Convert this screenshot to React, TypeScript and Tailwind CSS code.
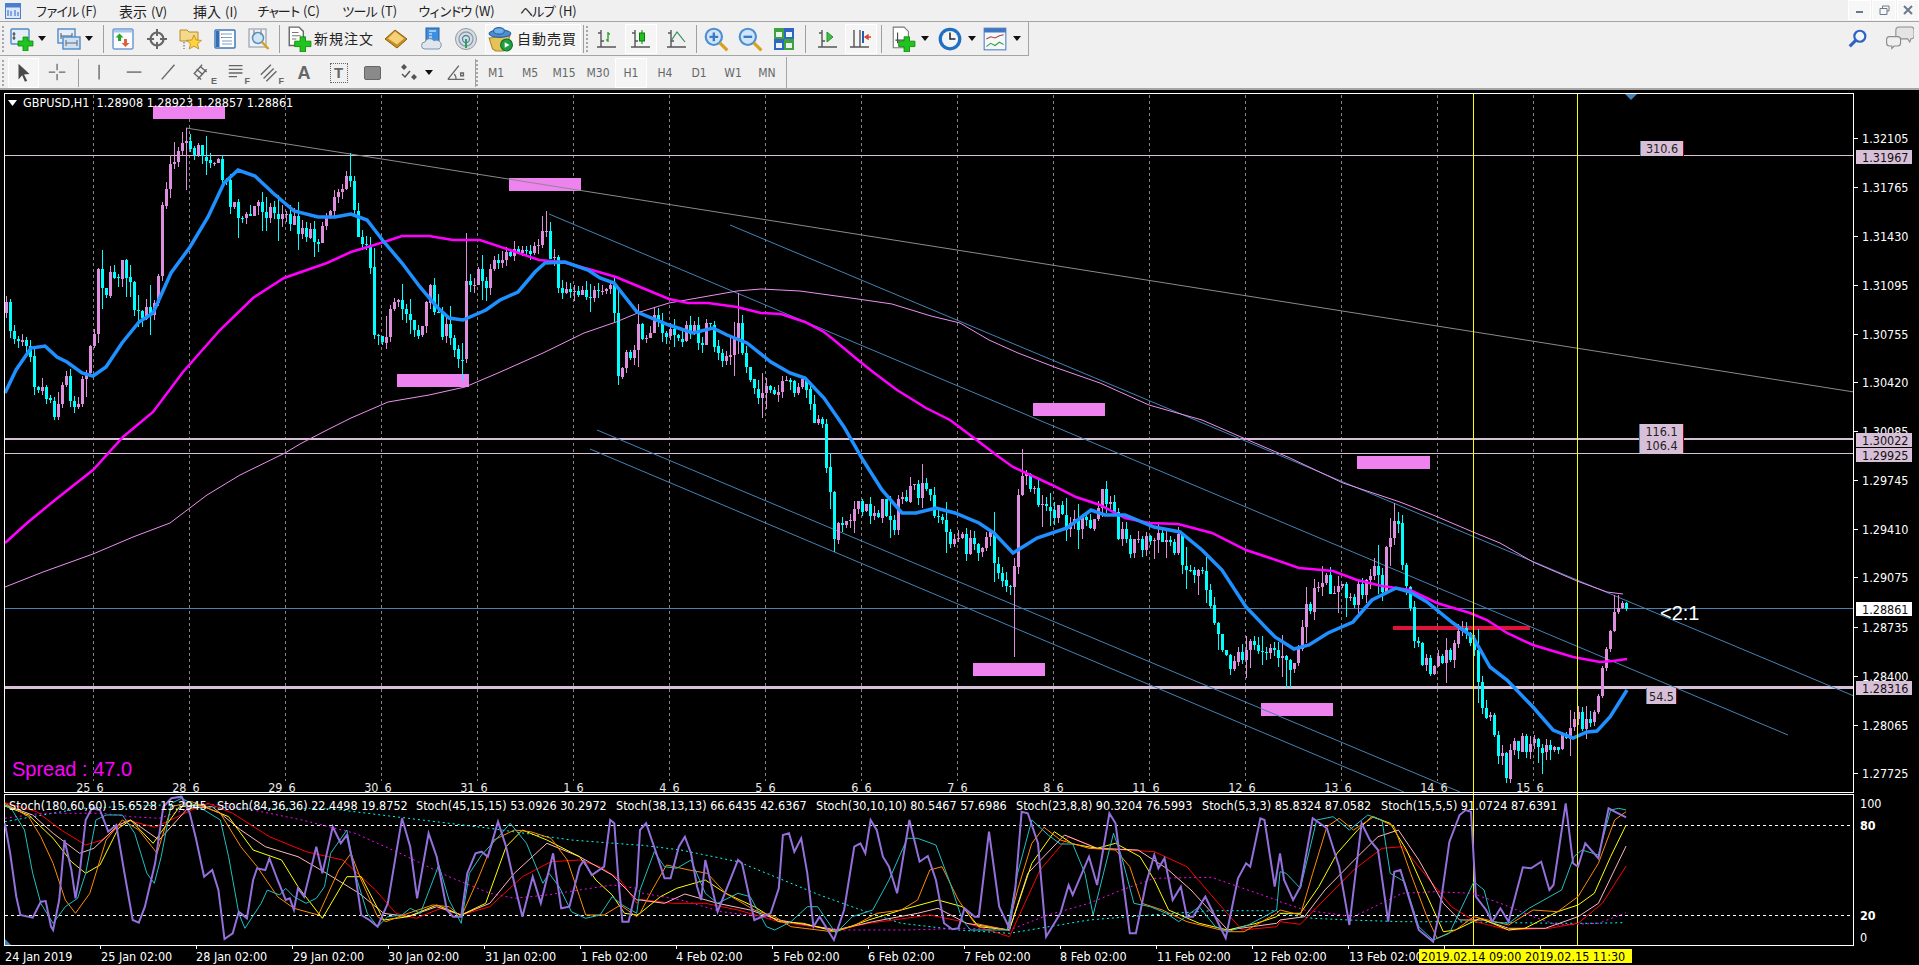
import React from 'react';

// ---- Tipos y helpers ----
type Pt = [number, number];
const arial = "'Liberation Sans', Arial, sans-serif";
const tahoma = "'DejaVu Sans Condensed', 'DejaVu Sans', 'Liberation Sans', sans-serif";

// zoom coords -> page coords for the stochastic window
const z = (off: number, pts: number[][]): string =>
  pts.map(([X, Y]) => `${((X + off) / 2.45).toFixed(1)},${(740 + Y / 3).toFixed(1)}`).join(' ');
const st = (a: number[][], b: number[][], c: number[][]) => `${z(0, a)} ${z(1568, b)} ${z(3136, c)}`;
const poly = (p: number[][]) => p.map(([x, y]) => `${x},${y}`).join(' ');

const GRID = Array.from({ length: 16 }, (_, i) => 93.5 + 96 * i);

// ---- Medias móviles ----
const BLUE_MA = [[5,393],[16,370],[31,348],[45,346],[57,357],[67,362],[82,373],[93,376],[106,367],[122,343],[139,322],[153,313],[171,273],[190,247],[208,217],[224,183],[238,170],[255,176],[273,193],[294,211],[318,217],[335,217],[351,214],[367,220],[384,242],[402,263],[420,287],[437,307],[449,318],[463,320],[486,310],[500,300],[518,292],[535,272],[545,263],[565,262],[588,270],[600,278],[614,283],[637,312],[669,325],[693,333],[713,328],[727,335],[747,343],[771,362],[790,373],[805,378],[824,398],[844,427],[863,460],[882,490],[902,513],[916,513],[936,508],[955,513],[979,523],[994,533],[1013,553],[1037,538],[1067,528],[1091,510],[1105,515],[1125,515],[1154,527],[1180,532],[1202,550],[1222,570],[1246,607],[1275,637],[1294,649],[1309,645],[1328,633],[1353,622],[1372,600],[1396,588],[1410,592],[1427,602],[1453,623],[1473,637],[1490,667],[1507,680],[1533,707],[1553,730],[1573,738],[1587,732],[1597,731],[1610,717],[1627,690]];
const MAGENTA_MA = [[5,543],[27,523],[55,500],[93,470],[123,437],[153,412],[183,372],[220,330],[253,298],[284,278],[327,263],[351,252],[384,242],[402,236],[429,236],[453,240],[480,240],[510,250],[539,260],[563,262],[592,270],[616,277],[640,287],[669,299],[688,303],[708,303],[737,307],[761,313],[781,314],[805,322],[824,332],[834,340],[858,360],[873,372],[897,390],[926,408],[950,420],[974,438],[999,457],[1013,467],[1052,485],[1076,497],[1100,505],[1125,518],[1149,523],[1178,524],[1212,533],[1246,550],[1270,558],[1299,568],[1333,571],[1357,580],[1382,586],[1410,590],[1437,603],[1470,613],[1487,620],[1507,633],[1533,645],[1573,657],[1600,662],[1613,661],[1627,659]];
const PALE_MA = [[5,587],[43,572],[93,554],[133,537],[170,523],[207,495],[240,475],[285,453],[300,444],[327,430],[351,418],[388,402],[429,395],[465,387],[498,373],[543,353],[584,333],[616,322],[640,312],[669,303],[703,297],[737,291],[761,289],[800,291],[858,299],[892,304],[931,316],[960,323],[989,340],[1018,353],[1057,368],[1100,383],[1149,405],[1202,420],[1241,437],[1290,458],[1343,483],[1400,502],[1433,515],[1473,532],[1500,543],[1533,562],[1577,581],[1607,592],[1623,594]];

// ---- Precio: camino aproximado de cierres ----
const PRICE: Pt[] = [[5,310],[12,333],[29,337],[33,377],[49,397],[55,410],[65,377],[75,407],[82,377],[92,350],[98,270],[106,290],[114,272],[124,267],[131,293],[135,323],[145,317],[157,290],[161,200],[171,167],[182,137],[190,147],[200,153],[212,153],[220,173],[233,203],[245,223],[257,203],[269,210],[286,217],[302,227],[322,237],[327,207],[347,170],[353,213],[361,240],[369,237],[373,330],[384,333],[392,310],[408,310],[420,337],[429,290],[441,323],[453,350],[463,353],[465,277],[486,280],[494,260],[514,253],[531,263],[545,223],[551,253],[559,287],[584,287],[600,303],[612,283],[618,377],[629,357],[640,330],[655,323],[669,337],[688,333],[703,337],[708,322],[715,360],[732,353],[737,323],[744,363],[756,387],[771,400],[785,388],[805,380],[810,413],[824,433],[829,493],[834,530],[848,510],[863,512],[882,508],[894,520],[902,497],[926,493],[936,510],[945,533],[970,547],[989,537],[994,560],[1001,573],[1013,600],[1017,490],[1028,483],[1042,510],[1067,520],[1091,530],[1100,500],[1113,493],[1117,527],[1127,543],[1154,540],[1178,543],[1188,573],[1202,567],[1212,607],[1222,643],[1229,662],[1246,650],[1270,643],[1285,667],[1294,663],[1309,603],[1328,583],[1353,600],[1370,570],[1382,583],[1391,520],[1398,530],[1406,587],[1413,633],[1418,653],[1433,673],[1442,660],[1453,653],[1458,637],[1472,637],[1477,687],[1482,700],[1490,720],[1495,745],[1506,768],[1515,745],[1530,745],[1550,740],[1565,740],[1575,720],[1590,725],[1597,703],[1602,668],[1605,653],[1609,637],[1613,613],[1618,608],[1621,602],[1626,609]];

// mechas largas visibles en el gráfico
const SPIKE_UP: Record<number, number> = { 186: 128, 350: 153, 466: 233, 546: 211, 738: 293, 1022: 449, 1394: 503, 1614: 595, 1618: 595 };
const SPIKE_DOWN: Record<number, number> = { 1014: 657, 1286: 688, 834: 552, 618: 385, 186: 190 };

function interp(x: number) {
  for (let i = 1; i < PRICE.length; i++) {
    if (x <= PRICE[i][0]) {
      const [x0, y0] = PRICE[i - 1];
      const [x1, y1] = PRICE[i];
      return y0 + ((x - x0) / (x1 - x0 || 1)) * (y1 - y0);
    }
  }
  return PRICE[PRICE.length - 1][1];
}

function buildCandles() {
  let seed = 7;
  const rnd = () => {
    seed = (seed * 16807) % 2147483647;
    return seed / 2147483647;
  };
  const out: { x: number; o: number; c: number; h: number; l: number }[] = [];
  let prev = interp(6);
  for (let x = 6; x <= 1626; x += 4) {
    const amp = x > 1590 ? 0 : 22;
    const c = interp(x) + (rnd() - 0.5) * amp;
    const o = prev;
    const w = x > 1590 ? 3 : rnd() > 0.75 ? 22 : 9;
    let h = Math.min(o, c) - rnd() * w;
    let l = Math.max(o, c) + rnd() * w;
    if (SPIKE_UP[x]) h = SPIKE_UP[x];
    if (SPIKE_DOWN[x]) l = SPIKE_DOWN[x];
    out.push({ x, o, c, h, l });
    prev = c;
  }
  return out;
}
const CANDLES = buildCandles();

// ---- Estocásticos ----
const S_PURPLE = st(
  [[12,250],[25,340],[40,470],[50,525],[80,533],[100,485],[112,483],[125,560],[130,570],[145,480],[158,300],[175,390],[185,475],[195,400],[210,240],[225,205],[245,210],[265,275],[285,255],[305,400],[325,540],[340,548],[355,500],[380,370],[400,200],[420,175],[445,170],[465,220],[480,295],[500,410],[520,390],[535,450],[550,597],[570,580],[585,515],[605,535],[620,420],[630,385],[650,390],[660,355],[680,420],[700,480],[710,475],[720,510],[730,445],[745,470],[775,320],[790,400],[815,260],[835,310],[850,285],[870,400],[885,525],[905,540],[925,560],[950,490],[985,235],[1005,320],[1022,475],[1050,280],[1070,350],[1095,510],[1110,530],[1130,530],[1145,400],[1165,340],[1180,335],[1195,350],[1220,245],[1240,320],[1260,430],[1280,530],[1305,410],[1325,490],[1355,340],[1375,505],[1395,500],[1420,380],[1430,362],[1450,405],[1480,380],[1495,240],[1505,250],[1515,420],[1525,545],[1540,545],[1560,440]],
  [[0,270],[15,250],[40,340],[60,415],[75,415],[95,320],[110,290],[125,340],[140,440],[150,480],[160,360],[190,515],[240,360],[250,370],[280,540],[320,520],[340,445],[350,285],[365,280],[378,335],[395,295],[410,400],[425,560],[440,530],[475,600],[500,510],[525,320],[540,310],[552,340],[565,240],[580,270],[595,350],[610,380],[630,460],[660,240],[685,365],[705,348],[725,420],[745,550],[765,568],[780,565],[795,505],[820,530],[830,530],[855,275],[880,500],[905,565],[920,440],[935,215],[950,220],[975,310],[995,590],[1010,560],[1030,520],[1050,435],[1060,465],[1100,350],[1120,435],[1150,220],[1165,250],[1180,390],[1200,580],[1215,580],[1240,430],[1260,345],[1270,385],[1285,355],[1305,480],[1325,440],[1340,530],[1355,530],[1385,470],[1435,595],[1465,415],[1485,370],[1495,380],[1520,235],[1530,240],[1555,440]],
  [[0,340],[10,420],[32,480],[50,440],[80,235],[115,265],[145,380],[170,555],[200,250],[220,300],[240,330],[265,545],[280,395],[295,390],[340,570],[375,605],[390,520],[415,305],[440,225],[455,210],[468,215],[480,470],[505,510],[520,545],[540,505],[560,545],[595,382],[615,385],[640,365],[660,450],[670,435],[700,190],[718,370],[730,380],[748,310],[780,355],[805,205],[820,215],[848,232]]
);
const S_CYAN = st(
  [[12,195],[30,210],[60,270],[80,400],[100,490],[130,550],[160,500],[190,475],[210,400],[235,240],[260,225],[300,225],[330,280],[360,400],[378,430],[395,350],[420,190],[445,175],[500,210],[540,240],[560,350],[585,520],[600,565],[640,490],[655,450],[685,465],[700,445],[720,470],[750,490],[775,475],[795,440],[810,340],[850,270],[870,400],[900,520],[925,560],[950,530],[985,525],[1005,505],[1030,520],[1075,375],[1100,480],[1130,550],[1150,400],[1180,345],[1225,285],[1250,250],[1290,310],[1330,430],[1345,400],[1370,440],[1400,515],[1435,535],[1470,525],[1500,470],[1525,495],[1560,520]],
  [[0,450],[35,335],[60,380],[90,385],[125,360],[160,460],[190,490],[240,460],[270,470],[310,560],[330,570],[370,545],[410,500],[435,500],[480,580],[520,530],[570,510],[610,420],[655,295],[680,295],[725,315],[760,430],[790,540],[810,570],[870,570],[900,570],[925,400],[960,240],[1000,285],[1030,312],[1060,312],[1090,400],[1110,525],[1160,280],[1180,350],[1210,490],[1250,500],[1290,520],[1320,545],[1370,500],[1410,560],[1440,575],[1490,555],[1560,510]],
  [[0,395],[15,400],[50,445],[90,240],[130,230],[170,270],[215,225],[250,240],[270,400],[305,425],[340,560],[375,600],[415,580],[475,425],[500,450],[520,545],[560,550],[610,505],[690,450],[720,350],[740,330],[780,345],[810,210],[830,205],[848,210]]
);
const S_ORANGE = st(
  [[12,190],[70,230],[100,290],[130,370],[160,480],[185,520],[220,460],[260,300],[300,240],[340,270],[385,340],[420,200],[470,185],[540,220],[590,320],[630,380],[680,470],[720,505],[780,525],[830,390],[860,340],[885,420],[925,530],[945,545],[1000,520],[1060,495],[1100,500],[1130,530],[1170,420],[1210,300],[1260,270],[1300,275],[1350,295],[1390,360],[1420,470],[1435,525],[1480,525],[1520,495],[1560,530]],
  [[0,520],[30,450],[65,375],[120,390],[165,400],[210,460],[280,510],[330,530],[370,560],[470,575],[520,560],[580,520],[640,510],[680,480],[710,390],[740,380],[780,480],[820,550],[900,570],[925,450],[960,310],[990,262],[1030,300],[1100,325],[1165,330],[1200,380],[1230,490],[1280,510],[1340,545],[1440,575],[1480,575],[1560,520]],
  [[0,510],[50,525],[80,400],[115,260],[145,235],[180,270],[230,230],[280,260],[320,400],[360,530],[385,595],[430,570],[475,530],[560,555],[620,510],[680,515],[730,470],[780,370],[820,240],[848,215]]
);
const S_YELLOW = st(
  [[12,198],[70,225],[130,295],[175,365],[210,400],[245,375],[290,265],[320,240],[375,310],[440,200],[490,195],[560,230],[620,330],[690,360],[730,440],[790,535],[850,410],[885,410],[940,540],[1000,530],[1070,495],[1130,525],[1190,490],[1240,320],[1280,270],[1340,300],[1420,350],[1460,420],[1500,465],[1530,520],[1560,525]],
  [[0,520],[50,470],[90,445],[160,420],[210,460],[280,500],[340,545],[400,550],[480,575],[560,540],[640,510],[730,480],[790,500],[830,560],[905,570],[960,370],[1015,275],[1060,312],[1120,325],[1165,310],[1225,350],[1260,420],[1295,510],[1370,550],[1440,570],[1510,550],[1560,530]],
  [[0,520],[50,520],[95,440],[140,340],[190,270],[225,230],[270,250],[310,330],[350,440],[400,575],[430,570],[490,535],[560,570],[600,565],[680,515],[730,495],[770,460],[810,350],[848,255]]
);
const S_PINK = st(
  [[12,195],[80,225],[130,280],[195,340],[230,325],[290,255],[320,240],[390,300],[460,205],[520,200],[590,270],[650,320],[730,350],[800,400],[880,460],[940,520],[1000,530],[1070,500],[1130,525],[1200,490],[1260,400],[1340,310],[1420,350],[1500,405],[1560,480]],
  [[0,480],[60,490],[110,462],[190,490],[270,510],[340,540],[480,570],[570,545],[680,520],[730,505],[800,550],[905,570],[950,400],[1040,285],[1120,325],[1220,330],[1290,385],[1350,450],[1440,570],[1560,550]],
  [[0,540],[60,530],[110,450],[190,350],[240,290],[290,270],[340,360],[400,490],[440,540],[500,540],[560,565],[650,565],[730,530],[780,490],[848,318]]
);
const S_RED = st(
  [[12,188],[90,215],[150,270],[210,315],[250,300],[310,240],[380,262],[470,210],[510,190],[570,220],[660,290],[750,335],[840,360],[920,450],[970,520],[1020,535],[1080,505],[1130,525],[1200,500],[1280,410],[1350,365],[1420,360],[1470,380],[1520,420],[1560,490]],
  [[0,478],[80,490],[160,490],[240,510],[340,545],[480,570],[560,550],[710,525],[790,545],[905,590],[980,390],[1050,290],[1120,325],[1260,335],[1340,380],[1410,480],[1475,570],[1560,560]],
  [[0,545],[50,553],[100,490],[180,390],[250,325],[300,320],[360,410],[420,500],[480,545],[560,570],[660,565],[730,550],[790,490],[848,378]]
);
const S_MAGENTA_DOT = st(
  [[12,235],[100,220],[250,220],[320,230],[390,235],[500,190],[600,205],[740,240],[870,280],[980,340],[1100,410],[1200,460],[1260,475],[1340,465],[1500,435],[1560,445]],
  [[0,458],[100,480],[200,515],[300,530],[400,555],[500,570],[650,570],[800,565],[905,570],[1000,525],[1100,490],[1180,450],[1260,415],[1400,412],[1560,480]],
  [[0,485],[60,510],[180,530],[300,460],[380,455],[470,460],[540,490],[620,530],[680,555],[780,550],[848,518]]
);
const S_CYAN_DOT = st(
  [[12,245],[80,230],[200,205],[400,195],[600,205],[800,205],[1000,235],[1200,265],[1400,300],[1560,315]],
  [[0,315],[100,330],[240,365],[340,415],[440,465],[530,505],[640,550],[780,570],[905,580],[1100,540],[1250,525],[1400,512],[1560,512]],
  [[0,520],[80,535],[170,540],[300,545],[420,545],[560,548],[700,550],[760,550],[840,548]]
);

// ---- Etiquetas de ejes ----
const PRICES: [string, number][] = [['1.32105',138],['1.31765',187],['1.31430',236],['1.31095',285],['1.30755',334],['1.30420',382],['1.30085',431],['1.29745',480],['1.29410',529],['1.29075',577],['1.28735',627],['1.28400',676],['1.28065',725],['1.27725',773]];
const DAYS = ['25','28','29','30','31','1','4','5','6','7','8','11','12','13','14','15'];
const DATES: [string, number][] = [['25 Jan 02:00',101],['28 Jan 02:00',196],['29 Jan 02:00',293],['30 Jan 02:00',388],['31 Jan 02:00',485],['1 Feb 02:00',581],['4 Feb 02:00',676],['5 Feb 02:00',773],['6 Feb 02:00',868],['7 Feb 02:00',964],['8 Feb 02:00',1060],['11 Feb 02:00',1157],['12 Feb 02:00',1253],['13 Feb 02:00',1349]];
const BOXES = [[153,106,72],[509,178,72],[397,374,72],[1033,403,72],[973,663,72],[1357,456,73],[1261,703,72]];
const TICKS = Array.from({ length: 16 }, (_, i) => 100 + 96 * i);
const STOCHS: [string, number][] = [
  ['Stoch(180,60,60) 15.6528 15.2945', 9],
  ['Stoch(84,36,36) 22.4498 19.8752', 217],
  ['Stoch(45,15,15) 53.0926 30.2972', 416],
  ['Stoch(38,13,13) 66.6435 42.6367', 616],
  ['Stoch(30,10,10) 80.5467 57.6986', 816],
  ['Stoch(23,8,8) 90.3204 76.5993', 1016],
  ['Stoch(5,3,3) 85.8324 87.0582', 1202],
  ['Stoch(15,5,5) 91.0724 87.6391', 1381],
];

const tx = { fontFamily: tahoma };
const ar = { fontFamily: arial };
const FS = 12.5;

function PriceTag({ y, label, bg }: { y: number; label: string; bg: string }) {
  return (
    <g>
      <rect x={1856} y={y} width={56} height={14} fill={bg} />
      <text x={1862} y={y + 11.5} fontSize={FS} fill="#111" style={tx}>{label}</text>
    </g>
  );
}

function LineTag({ x, y, w, h, label }: { x: number; y: number; w: number; h: number; label: string }) {
  return (
    <g>
      <rect x={x} y={y} width={w} height={h} fill="#d8bfd8" />
      <rect x={x} y={y} width={1} height={h} fill="#4682b4" />
      <rect x={x + w - 1} y={y} width={1} height={h} fill="#8b0000" />
      <text x={x + w / 2} y={y + h - 3} fontSize={FS} fill="#222" textAnchor="middle" style={tx}>{label}</text>
    </g>
  );
}

function Chart() {
  return (
    <svg viewBox="0 90 1919 875" className="block w-[1919px] h-[875px]">
      <rect x={0} y={90} width={1919} height={875} fill="#000" />
      {/* rejilla */}
      {GRID.map((g) => (
        <line key={g} x1={g} x2={g} y1={95} y2={781} stroke="#808080" strokeDasharray="3 3" shapeRendering="crispEdges" />
      ))}
      {/* cajas violeta */}
      {BOXES.map(([x, y, w]) => (
        <rect key={x} x={x} y={y} width={w} height={13} fill="#ee82ee" />
      ))}
      {/* líneas horizontales */}
      <g shapeRendering="crispEdges">
        <rect x={5} y={155} width={1849} height={1} fill="#d8bfd8" />
        <rect x={5} y={438} width={1849} height={2} fill="#d8bfd8" />
        <rect x={5} y={453} width={1849} height={1} fill="#d8bfd8" />
        <rect x={5} y={686} width={1849} height={3} fill="#d8bfd8" />
        <rect x={5} y={608} width={1849} height={1} fill="#4682b4" />
        <rect x={1393} y={626} width={137} height={4} fill="#dc143c" />
      </g>
      {/* líneas de tendencia */}
      <line x1={186} y1={128} x2={1854} y2={392} stroke="#8a8a8a" />
      <g stroke="#4682b4">
        <line x1={549} y1={214} x2={1788} y2={735} />
        <line x1={730} y1={225} x2={1854} y2={696} />
        <line x1={597} y1={430} x2={1460} y2={792} />
        <line x1={590} y1={449} x2={1404} y2={792} />
      </g>
      {/* velas */}
      <g shapeRendering="crispEdges">
        {CANDLES.map((b) => {
          const up = b.c < b.o;
          const col = up ? '#dd8fdd' : '#00ffff';
          const top = Math.round(Math.min(b.o, b.c));
          const h = Math.max(1, Math.round(Math.abs(b.o - b.c)));
          return (
            <g key={b.x} fill={col}>
              <rect x={b.x} y={Math.round(b.h)} width={1} height={Math.max(1, Math.round(b.l - b.h))} />
              <rect x={b.x - 1} y={top} width={3} height={h} />
            </g>
          );
        })}
      </g>
      {/* medias */}
      <polyline points={poly(PALE_MA)} fill="none" stroke="#ee90ee" strokeWidth={1} />
      <polyline points={poly(MAGENTA_MA)} fill="none" stroke="#ff00ff" strokeWidth={2.5} />
      <polyline points={poly(BLUE_MA)} fill="none" stroke="#1e90ff" strokeWidth={3.5} />
      {/* verticales amarillas */}
      <g shapeRendering="crispEdges">
        <rect x={1473} y={93} width={1} height={852} fill="#ffff00" />
        <rect x={1577} y={93} width={1} height={852} fill="#ffff00" />
      </g>
      {/* marco */}
      <g fill="none" stroke="#fff" shapeRendering="crispEdges">
        <rect x={4.5} y={93.5} width={1849} height={699} />
        <rect x={4.5} y={794.5} width={1849} height={151} />
      </g>
      <polygon points="1625,94 1637,94 1631,100" fill="#4682b4" />
      <polygon points="5,939 5,945 11,945" fill="#4682b4" />
      {/* cabecera */}
      <polygon points="8,100 17,100 12.5,106" fill="#fff" />
      <text x={23} y={107} fontSize={FS} fill="#fff" style={tx} xmlSpace="preserve">GBPUSD,H1  1.28908 1.28923 1.28857 1.28861</text>
      <text x={12} y={776} fontSize={20} fill="#ff00ff" style={ar}>Spread : 47.0</text>
      <text x={1660} y={620} fontSize={20} fill="#fff" style={ar}>&lt;2:1</text>
      {/* días */}
      {DAYS.map((d, i) => (
        <g key={d} fontSize={FS} fill="#e8e8e8" style={tx}>
          <text x={GRID[i] - 3} y={792} textAnchor="end">{d}</text>
          <text x={GRID[i] + 3} y={792}>6</text>
        </g>
      ))}
      {/* eje de precios */}
      {PRICES.map(([p, y]) => (
        <g key={p}>
          <line x1={1854} x2={1858} y1={y} y2={y} stroke="#fff" shapeRendering="crispEdges" />
          <text x={1862} y={y + 5} fontSize={FS} fill="#fff" style={tx}>{p}</text>
        </g>
      ))}
      <PriceTag y={150} label="1.31967" bg="#d8bfd8" />
      <PriceTag y={433} label="1.30022" bg="#d8bfd8" />
      <PriceTag y={448} label="1.29925" bg="#d8bfd8" />
      <PriceTag y={681} label="1.28316" bg="#d8bfd8" />
      <PriceTag y={602} label="1.28861" bg="#ffffff" />
      <LineTag x={1640} y={141} w={44} h={15} label="310.6" />
      <LineTag x={1639} y={424} w={45} h={15} label="116.1" />
      <LineTag x={1639} y={439} w={45} h={14} label="106.4" />
      <LineTag x={1646} y={688} w={31} h={16} label="54.5" />
      {/* ventana estocástica */}
      <g stroke="#fff" strokeDasharray="3 3" shapeRendering="crispEdges">
        <line x1={5} x2={1854} y1={825} y2={825} />
        <line x1={5} x2={1854} y1={915} y2={915} />
      </g>
      <polyline points={S_CYAN_DOT} fill="none" stroke="#00ffff" strokeDasharray="2 3" />
      <polyline points={S_MAGENTA_DOT} fill="none" stroke="#ff00ff" strokeDasharray="2 3" />
      <polyline points={S_RED} fill="none" stroke="#ff0000" />
      <polyline points={S_PINK} fill="none" stroke="#ffb6c1" />
      <polyline points={S_YELLOW} fill="none" stroke="#ffff00" />
      <polyline points={S_ORANGE} fill="none" stroke="#ff8c00" />
      <polyline points={S_CYAN} fill="none" stroke="#20c0c0" />
      <polyline points={S_PURPLE} fill="none" stroke="#9370db" strokeWidth={2} />
      {STOCHS.map(([t, x]) => (
        <text key={t} x={x} y={810} fontSize={FS} fill="#fff" style={tx}>{t}</text>
      ))}
      <g fontSize={FS} fill="#fff" style={tx}>
        <text x={1860} y={808}>100</text>
        <text x={1860} y={830} fontWeight={700}>80</text>
        <text x={1860} y={920} fontWeight={700}>20</text>
        <text x={1860} y={942}>0</text>
      </g>
      {/* eje de fechas */}
      <text x={5} y={961} fontSize={FS} fill="#fff" style={tx}>24 Jan 2019</text>
      {TICKS.map((t) => (
        <line key={t} x1={t} x2={t} y1={945} y2={949} stroke="#fff" shapeRendering="crispEdges" />
      ))}
      {DATES.map(([d, x]) => (
        <text key={d} x={x} y={961} fontSize={FS} fill="#fff" style={tx}>{d}</text>
      ))}
      <rect x={1419} y={949} width={213} height={14} fill="#ffff00" />
      <text x={1421} y={961} fontSize={FS} fill="#000" style={tx} xmlSpace="preserve">2019.02.14 09:00 2019.02.15 11:30</text>
    </svg>
  );
}

// ---- Iconos de la barra ----
const Plus = () => <path d="M13 10h5v4h5v5h-5v5h-5v-5H8v-5h5z" fill="#21c41f" stroke="#0b8a0b" strokeWidth="0.8" />;
const Axes = ({ c = '#555' }: { c?: string }) => (
  <path d="M6 3v17M2 20h19M3 6h3M6 14h3" fill="none" stroke={c} strokeWidth="1.4" />
);
const Ico = ({ s = 24, children }: { s?: number; children: React.ReactNode }) => (
  <svg width={s} height={s} viewBox="0 0 24 24">{children}</svg>
);
const Caret = () => (
  <svg width="8" height="5" viewBox="0 0 8 5"><path d="M0 0h8L4 5z" fill="#111" /></svg>
);

const IcoNewChart = () => (
  <Ico>
    <rect x="1" y="2" width="18" height="15" rx="1" fill="#e4effb" stroke="#4f8ac6" strokeWidth="1.4" />
    <path d="M4 5v8M2.500 7h3M2.500 11h3" stroke="#333" fill="none" />
    <Plus />
  </Ico>
);
const IcoProfile = () => (
  <Ico>
    <rect x="1" y="2" width="17" height="14" fill="#e4effb" stroke="#4f8ac6" strokeWidth="1.4" />
    <path d="M4 6v6M15 6v6M4 9h11" stroke="#555" fill="none" />
    <rect x="6" y="10" width="17" height="12" fill="#cfe0f5" stroke="#4f8ac6" strokeWidth="1.4" />
    <path d="M9 13v6M20 13v6M9 16h11" stroke="#666" fill="none" />
  </Ico>
);
const IcoMarket = () => (
  <Ico>
    <rect x="2" y="2" width="20" height="20" rx="1.500" fill="#fafcff" stroke="#6f9bd1" strokeWidth="1.5" />
    <rect x="3" y="3" width="18" height="2.500" fill="#a9c8ea" />
    <path d="M8.500 6.500l4 4h-2.500v3.500H7v-3.500H4.500z" fill="#28a428" />
    <path d="M14.500 20l-4-4h2.500v-4h3v4h2.500z" fill="#e0623a" />
  </Ico>
);
const IcoNav = () => (
  <Ico>
    <circle cx="12" cy="12" r="6.500" fill="none" stroke="#666" strokeWidth="2.200" />
    <path d="M12 2v7M12 15v7M2 12h7M15 12h7" stroke="#666" strokeWidth="2" />
  </Ico>
);
const IcoFav = () => (
  <Ico>
    <path d="M1 3h7l2 2h9v9H1z" fill="#f3d98a" stroke="#b98a2c" />
    <path d="M5 15v7" stroke="#555" strokeDasharray="1.500 1.500" />
    <path d="M15 8l2.200 5 5.300.4-4 3.400 1.300 5.200-4.800-2.800-4.800 2.800 1.300-5.200-4-3.400 5.300-.4z" fill="#ffd23f" stroke="#b9891a" strokeWidth="0.8" />
  </Ico>
);
const IcoTerminal = () => (
  <Ico>
    <rect x="2" y="3" width="20" height="18" rx="1" fill="#fff" stroke="#3f78b8" strokeWidth="1.500" />
    <rect x="3" y="4" width="3.500" height="16" fill="#2f6fb8" />
    <path d="M9 7h10M9 10.500h10M9 14h10M9 17h10" stroke="#7f9fc5" />
    <path d="M8 7h1M8 10.500h1" stroke="#d9442c" />
  </Ico>
);
const IcoTester = () => (
  <Ico>
    <rect x="2" y="2" width="17" height="18" fill="#eef1f5" stroke="#a0a8b3" strokeWidth="1.300" />
    <circle cx="11" cy="11" r="5.500" fill="#cfe6f7" stroke="#5f8fb5" strokeWidth="1.500" />
    <path d="M7 3v5M14 3v5" stroke="#777" />
    <path d="M15 15l6.500 7" stroke="#d7a21f" strokeWidth="2.500" />
  </Ico>
);
const IcoOrder = () => (
  <Ico s={26}>
    <path d="M3 1h9l4 4v13H3z" fill="#fff" stroke="#666" strokeWidth="1.300" />
    <path d="M5.500 6h6M5.500 9h8M5.500 12h4" stroke="#777" fill="none" />
    <Plus />
  </Ico>
);
const IcoBook = () => (
  <Ico>
    <path d="M1 12l10-9 12 9-10 9z" fill="#c98f1f" stroke="#8a5f10" />
    <path d="M4 11.500l7-7 9 7-7 6z" fill="#f4d27a" />
  </Ico>
);
const IcoCloud = () => (
  <Ico>
    <rect x="6" y="1" width="13" height="14" fill="#3f8fe0" stroke="#245f9f" />
    <path d="M9 4h7M9 7h3M9 10h3" stroke="#fff" />
    <path d="M5 22a3.500 3.500 0 0 1 0-7 5 5 0 0 1 9-1 4 4 0 0 1 5 8z" fill="#dfe6ee" stroke="#7f93a8" />
  </Ico>
);
const IcoRadio = () => (
  <Ico>
    <circle cx="12" cy="12" r="10.500" fill="#d9dee3" stroke="#8f9aa5" />
    <circle cx="12" cy="12" r="7" fill="none" stroke="#8f9aa5" strokeWidth="1.300" />
    <circle cx="12" cy="12" r="3.500" fill="none" stroke="#4f86a8" strokeWidth="1.300" />
    <path d="M12 12v9" stroke="#2f9f5f" strokeWidth="2" />
  </Ico>
);
const IcoAuto = () => (
  <Ico s={26}>
    <path d="M2 11l19-2-3 12-3 2H8l-3-2z" fill="#e6c25a" stroke="#a8862a" />
    <ellipse cx="12" cy="7" rx="10" ry="3.500" fill="#4a8fd0" stroke="#2a5f9f" />
    <ellipse cx="11" cy="4.500" rx="5" ry="3" fill="#6fb0e6" stroke="#2a5f9f" />
    <circle cx="18" cy="17.500" r="5.500" fill="#1f9f3f" stroke="#0f6f2a" />
    <path d="M16.300 15l4.500 2.500-4.500 2.500z" fill="#fff" />
  </Ico>
);
const IcoBars = () => (
  <Ico>
    <Axes />
    <path d="M13 5v10M11 13h2M13 7h2" stroke="#2ca02c" strokeWidth="1.400" fill="none" />
  </Ico>
);
const IcoCandle = () => (
  <Ico>
    <Axes />
    <path d="M13 3v14" stroke="#0a7a0a" />
    <rect x="10.500" y="6" width="5" height="8" fill="#22c11f" stroke="#0a7a0a" />
  </Ico>
);
const IcoLine = () => (
  <Ico>
    <Axes />
    <path d="M6 14l6-9 8 10" stroke="#2e8b57" fill="none" strokeWidth="1.200" />
  </Ico>
);
const IcoZoom = ({ plus }: { plus?: boolean }) => (
  <Ico s={26}>
    <circle cx="10" cy="10" r="7.500" fill="#cfe6fa" stroke="#4f8fd0" strokeWidth="2" />
    <path d={plus ? 'M6 10h8M10 6v8' : 'M6 10h8'} stroke="#3f78c0" strokeWidth="2.200" />
    <path d="M15.500 15.500l7 7" stroke="#d7a21f" strokeWidth="3" />
  </Ico>
);
const IcoTile = () => (
  <Ico>
    <rect x="2" y="1" width="10" height="11" fill="#3ea33e" />
    <rect x="12" y="1" width="10" height="11" fill="#2f66c4" />
    <rect x="2" y="12" width="10" height="11" fill="#2f66c4" />
    <rect x="12" y="12" width="10" height="11" fill="#3ea33e" />
    <rect x="4" y="5" width="6" height="5" fill="#eaf2ea" />
    <rect x="14" y="5" width="6" height="5" fill="#eaf2fa" />
    <rect x="4" y="16" width="6" height="5" fill="#eaf2fa" />
    <rect x="14" y="16" width="6" height="5" fill="#eaf2ea" />
  </Ico>
);
const IcoScroll = () => (
  <Ico>
    <Axes />
    <path d="M11 5l6 5-6 5z" fill="#3fbf3f" stroke="#2a8f2a" />
  </Ico>
);
const IcoShift = () => (
  <Ico>
    <path d="M5 3v17M1 20h19M11 3v17" fill="none" stroke="#555" strokeWidth="1.400" />
    <path d="M14 4v12" stroke="#1f5fae" strokeWidth="2" />
    <path d="M22 10l-6 0M16 10l3-2v4z" stroke="#d9442c" fill="#d9442c" strokeWidth="1.400" />
  </Ico>
);
const IcoIndicators = () => (
  <Ico s={26}>
    <path d="M3 1h10l4 4v15H3z" fill="#fff" stroke="#777" />
    <path d="M7 6v10M5 13h8" stroke="#444" fill="none" />
    <Plus />
  </Ico>
);
const IcoClock = () => (
  <Ico s={26}>
    <circle cx="12" cy="12" r="10.500" fill="#1f6fc4" />
    <circle cx="12" cy="12" r="7.500" fill="#f2f4f6" />
    <path d="M12 6v6h5" stroke="#222" strokeWidth="1.400" fill="none" />
  </Ico>
);
const IcoTemplate = () => (
  <Ico s={26}>
    <rect x="2" y="2" width="20" height="20" fill="#f4f8fc" stroke="#4f81bd" />
    <rect x="2" y="2" width="20" height="4" fill="#3f78c0" />
    <path d="M4 12l4-2 4 1 4-2 4-1" stroke="#b5402a" fill="none" />
    <path d="M4 19l4-3 4 2 4-3 4 2" stroke="#3fa03f" fill="none" />
  </Ico>
);
const IcoSearch = () => (
  <Ico s={22}>
    <circle cx="14" cy="9" r="6" fill="#eef5fc" stroke="#2f62c0" strokeWidth="2.400" />
    <path d="M9.500 13.500L3 20" stroke="#2f62c0" strokeWidth="3.400" />
  </Ico>
);
const IcoChat = () => (
  <Ico s={28}>
    <path d="M10 3h11c2 0 3 1 3 3v5c0 2-1 3-3 3l-1 3-2-3h-8c-2 0-3-1-3-3V6c0-2 1-3 3-3z" transform="translate(2 -1) scale(.92)" fill="#e4e4e4" stroke="#8c8c8c" />
    <path d="M3 10h7c1.500 0 2.500 1 2.500 2.500v3c0 1.500-1 2.500-2.500 2.500H7l-2 2v-2H3c-1.500 0-2.500-1-2.500-2.500v-3C.5 11 1.500 10 3 10z" fill="#efefef" stroke="#8c8c8c" />
  </Ico>
);
const IcoCursor = () => (
  <Ico s={22}>
    <path d="M6 2l12 11-6 .5 3.500 7-2.500 1-3-7L6 19z" fill="#4a4a4a" />
  </Ico>
);
const IcoCross = () => (
  <Ico s={22}>
    <path d="M11 2v7M11 13v7M2 11h7M13 11h7" stroke="#666" strokeWidth="1.400" />
  </Ico>
);
const Draw = ({ d }: { d: string }) => (
  <Ico s={22}>
    <path d={d} stroke="#666" strokeWidth="1.500" fill="none" />
  </Ico>
);
const FibLabel = ({ t }: { t: string }) => (
  <span className="absolute right-[3px] bottom-[3px] text-[9px] font-bold leading-none text-[#666]" style={ar}>{t}</span>
);

const Sep = ({ className }: { className: string }) => <div className={`w-px h-[28px] bg-[#a0a0a0] shrink-0 ${className}`} />;
const Grip = ({ className = '' }: { className?: string }) => (
  <div className={`w-[3px] h-[26px] shrink-0 border-l-2 border-dotted border-[#a8a8a8] ${className}`} />
);
const Slot = ({ className, children }: { className: string; children: React.ReactNode }) => (
  <div className={`relative h-[32px] flex items-center justify-center shrink-0 ${className}`}>{children}</div>
);
const Active = ({ className, children }: { className: string; children: React.ReactNode }) => (
  <div className={`h-[30px] flex items-center justify-center shrink-0 border border-white bg-[#f5f5f5] ${className}`}>{children}</div>
);
const jp = "font-['Noto_Sans_CJK_JP','Noto_Sans',sans-serif]";

const MENUS: [string, string, string, string][] = [
  ['ファイル', '(F)', 'w-[84px]', 'text-[13px] tracking-[-2.500px]'],
  ['表示', '(V)', 'w-[74px]', 'text-[14px]'],
  ['挿入', '(I)', 'w-[64px]', 'text-[14px]'],
  ['チャート', '(C)', 'w-[85px]', 'text-[13px] tracking-[-2.500px]'],
  ['ツール', '(T)', 'w-[76px]', 'text-[13px] tracking-[-1.500px]'],
  ['ウィンドウ', '(W)', 'w-[102px]', 'text-[13px] tracking-[-2.500px]'],
  ['ヘルプ', '(H)', 'w-[70px]', 'text-[13px] tracking-[-1.500px]'],
];
const FRAMES_A = ['M1', 'M5', 'M15', 'M30'];
const FRAMES_B = ['H4', 'D1', 'W1', 'MN'];
const Frame = ({ t }: { t: string }) => (
  <span className="w-[34px] shrink-0 text-center text-[12px] text-[#666]" style={tx}>{t}</span>
);

export default function App() {
  return (
    <div className="w-[1919px] h-[965px] overflow-hidden bg-[#f0f0f0] flex flex-col">
      {/* Menú */}
      <div className="h-[22px] shrink-0 flex items-center border-b border-[#a5a5a5]">
        <div className="w-[35px] shrink-0 pl-[5px] flex">
          <svg width="16" height="16" viewBox="0 0 16 16">
            <rect x="0.500" y="0.500" width="15" height="15" fill="#dbe8fb" stroke="#4a7fd0" />
            <rect x="0.500" y="0.500" width="15" height="4" fill="#4a7fd0" />
            <path d="M3 7v6M6 8v5M10 7v6M13 9v4" stroke="#2f62c0" />
          </svg>
        </div>
        {MENUS.map(([t, k, w, c]) => (
          <span key={t} className={`${w} shrink-0 leading-none text-[#222] flex items-baseline gap-[4px] ${jp}`}>
            <span className={c}>{t}</span>
            <span className="text-[13px]">{k}</span>
          </span>
        ))}
        <div className="ml-auto flex h-[20px] gap-px self-start">
          <div className="w-[23px] bg-[#f7f7f7] border border-white flex items-center justify-center">
            <div className="w-[7px] h-[2px] bg-[#6a7a8c] mt-[4px]" />
          </div>
          <div className="w-[24px] bg-[#f7f7f7] border border-white flex items-center justify-center">
            <svg width="11" height="11" viewBox="0 0 11 11">
              <path d="M3.500 3V1h6.500v5H8M1 3.500h7v6H1z" fill="none" stroke="#6a7a8c" />
            </svg>
          </div>
          <div className="w-[22px] bg-[#f7f7f7] border border-white flex items-center justify-center">
            <svg width="10" height="10" viewBox="0 0 10 10">
              <path d="M1 1l8 8M9 1l-8 8" stroke="#6a7a8c" strokeWidth="2" />
            </svg>
          </div>
        </div>
      </div>

      {/* Barra estándar */}
      <div className="h-[34px] shrink-0 flex">
        <div className="w-[1029px] shrink-0 flex items-center border-r border-b border-[#a5a5a5]">
          <Grip className="ml-[2px]" />
          <div className="w-[4px] shrink-0" />
          <Slot className="w-[26px]"><IcoNewChart /></Slot>
          <Slot className="w-[13px]"><Caret /></Slot>
          <Slot className="w-[8px]"><span /></Slot>
          <Slot className="w-[26px]"><IcoProfile /></Slot>
          <Slot className="w-[13px]"><Caret /></Slot>
          <Sep className="ml-[8px]" />
          <Slot className="w-[34px] ml-[2px]"><IcoMarket /></Slot>
          <Slot className="w-[34px]"><IcoNav /></Slot>
          <Slot className="w-[34px]"><IcoFav /></Slot>
          <Slot className="w-[34px]"><IcoTerminal /></Slot>
          <Slot className="w-[34px]"><IcoTester /></Slot>
          <Sep className="ml-[3px]" />
          <Slot className="w-[26px] ml-[6px]"><IcoOrder /></Slot>
          <span className={`ml-[2px] w-[65px] shrink-0 text-[14px] tracking-[1px] text-[#222] ${jp}`}>新規注文</span>
          <Slot className="w-[34px]"><IcoBook /></Slot>
          <Slot className="w-[34px] ml-[2px]"><IcoCloud /></Slot>
          <Slot className="w-[34px]"><IcoRadio /></Slot>
          <Active className="w-[96px] ml-[2px] gap-[4px] pr-[2px]">
            <IcoAuto />
            <span className={`text-[14px] tracking-[1px] text-[#222] ${jp}`}>自動売買</span>
          </Active>
          <Sep className="ml-[2px]" />
          <Grip className="ml-[2px]" />
          <Slot className="w-[34px] ml-[1px]"><IcoBars /></Slot>
          <Active className="w-[32px] ml-[1px]"><IcoCandle /></Active>
          <Slot className="w-[34px] ml-[3px]"><IcoLine /></Slot>
          <Sep className="ml-[2px]" />
          <Slot className="w-[34px] ml-[2px]"><IcoZoom plus /></Slot>
          <Slot className="w-[34px]"><IcoZoom /></Slot>
          <Slot className="w-[34px]"><IcoTile /></Slot>
          <Sep className="ml-[4px]" />
          <Slot className="w-[34px] ml-[5px]"><IcoScroll /></Slot>
          <Active className="w-[32px] ml-[0px]"><IcoShift /></Active>
          <Sep className="ml-[4px]" />
          <Slot className="w-[30px] ml-[6px]"><IcoIndicators /></Slot>
          <Slot className="w-[14px]"><Caret /></Slot>
          <Slot className="w-[30px] ml-[3px]"><IcoClock /></Slot>
          <Slot className="w-[14px]"><Caret /></Slot>
          <Slot className="w-[30px] ml-[1px]"><IcoTemplate /></Slot>
          <Slot className="w-[14px]"><Caret /></Slot>
        </div>
        <div className="ml-auto flex items-center pr-[5px] gap-[17px]">
          <IcoSearch />
          <IcoChat />
        </div>
      </div>

      {/* Barra de dibujo y periodos */}
      <div className="h-[34px] shrink-0 flex pt-[1px] border-b-2 border-[#a5a5a5]">
        <div className="w-[787px] shrink-0 flex items-center border-r border-[#a5a5a5]">
          <Grip className="ml-[2px]" />
          <Active className="w-[31px] ml-[3px]"><IcoCursor /></Active>
          <Slot className="w-[34px] ml-[2px]"><IcoCross /></Slot>
          <Sep className="ml-[3px]" />
          <Slot className="w-[34px] ml-[4px]"><Draw d="M11 3v16" /></Slot>
          <Slot className="w-[34px] ml-[1px]"><Draw d="M3 11h16" /></Slot>
          <Slot className="w-[34px]"><Draw d="M4 19L18 3" /></Slot>
          <Slot className="w-[34px]"><Draw d="M2 13l9-10M6 19l10-11M5 8l7 6M3 13l7 6M9 5l7 6" /><FibLabel t="E" /></Slot>
          <Slot className="w-[33px]"><Draw d="M3 4h15M3 8h15M3 12h15M3 16h9" /><FibLabel t="F" /></Slot>
          <Slot className="w-[34px]"><Draw d="M2 14L13 3M5 18L16 7M8 21l11-11" /><FibLabel t="F" /></Slot>
          <Slot className="w-[34px]"><span className="text-[18px] font-bold leading-none text-[#666]" style={ar}>A</span></Slot>
          <Slot className="w-[35px]">
            <div className="w-[18px] h-[20px] border border-dotted border-[#666] flex items-center justify-center">
              <span className="text-[15px] font-bold leading-none text-[#666]" style={ar}>T</span>
            </div>
          </Slot>
          <Slot className="w-[33px]"><div className="w-[17px] h-[14px] rounded-[2px] bg-[#8a8a8a] border border-[#666]" /></Slot>
          <Slot className="w-[30px] ml-[5px]">
            <svg width="20" height="20" viewBox="0 0 20 20">
              <path d="M5 1l3 3-3 3-3-3zM15 11l3 3-3 3-3-3z" fill="#555" />
              <path d="M3 11l3 3 5-6" stroke="#555" strokeWidth="1.500" fill="none" />
            </svg>
          </Slot>
          <Slot className="w-[10px]"><Caret /></Slot>
          <Slot className="w-[34px] ml-[6px]"><Draw d="M2 19L14 4M2 19h18M9 13q2 2 2 6M16 12h3v3h-3z" /></Slot>
          <Sep className="ml-[1px]" />
          <Grip />
          {FRAMES_A.map((t) => <Frame key={t} t={t} />)}
          <Active className="w-[32px]">
            <span className="text-[12px] text-[#666]" style={tx}>H1</span>
          </Active>
          <div className="w-[1px] shrink-0" />
          {FRAMES_B.map((t) => <Frame key={t} t={t} />)}
        </div>
      </div>

      <Chart />
    </div>
  );
}
